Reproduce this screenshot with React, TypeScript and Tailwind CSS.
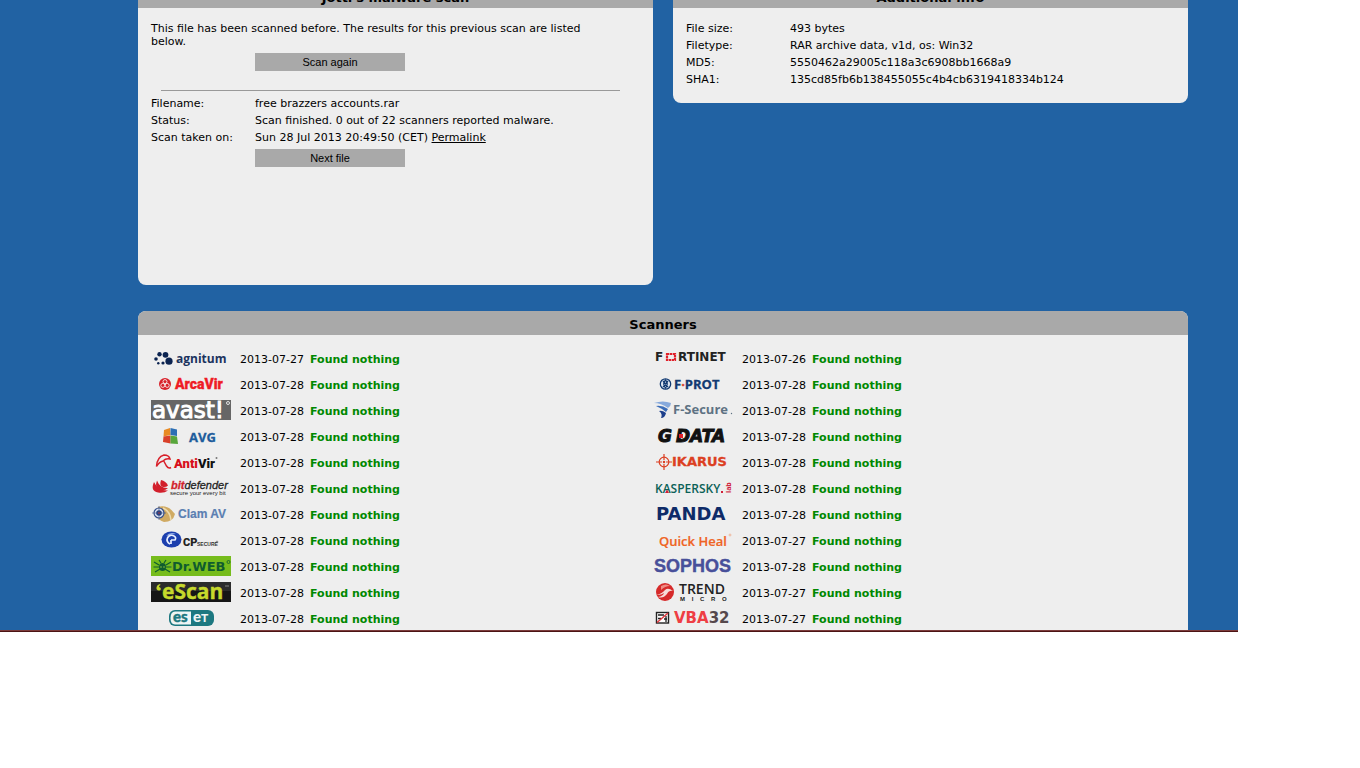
import React from "react";

type Scanner = { name: string; date: string; logo: React.ReactNode };

const leftScanners: Scanner[] = [
  {
    name: "agnitum",
    date: "2013-07-27",
    logo: (
      <>
        <g fill="#0b2350">
          <circle cx="5" cy="11" r="1.8" />
          <circle cx="8.5" cy="6.3" r="2.2" />
          <circle cx="14.5" cy="6.8" r="2.9" />
          <circle cx="18" cy="13.2" r="3.6" />
          <circle cx="12" cy="15" r="1.6" />
          <circle cx="7.3" cy="15.2" r="1.2" />
        </g>
        <text x="25" y="15" fontFamily="Open Sans" fontWeight="700" fontSize="12" fill="#1b335e">agnitum</text>
      </>
    ),
  },
  {
    name: "ArcaVir",
    date: "2013-07-28",
    logo: (
      <>
        <circle cx="14" cy="10" r="6" fill="#d8202a" />
        <g fill="none" stroke="#f6dcdc" strokeWidth="1">
          <circle cx="14" cy="7.6" r="2" />
          <circle cx="11.8" cy="11.4" r="2" />
          <circle cx="16.2" cy="11.4" r="2" />
        </g>
        <text x="24" y="15" fontFamily="Roboto" fontWeight="900" fontSize="14" fill="#ee1c25" stroke="#ee1c25" strokeWidth="0.3">ArcaVir</text>
      </>
    ),
  },
  {
    name: "avast!",
    date: "2013-07-28",
    logo: (
      <>
        <rect width="80" height="20" fill="#666" />
        <text x="1" y="18" fontFamily="DejaVu Sans" fontSize="23" fill="#fff" stroke="#fff" strokeWidth="1">avast!</text>
        <circle cx="77" cy="3" r="1.5" fill="none" stroke="#fff" strokeWidth="0.8" />
      </>
    ),
  },
  {
    name: "AVG",
    date: "2013-07-28",
    logo: (
      <>
        <path d="M13 4 L19 2 L19.500 9 L12.500 10.500z" fill="#e88a22" />
        <path d="M19.500 2 L26 3.500 L26 10 L19.500 9z" fill="#2c6fb4" />
        <path d="M12.500 10.500 L19.500 9.500 L19.500 17.500 L12 16z" fill="#d8402a" />
        <path d="M19.500 9.500 L26 10.500 L27 18 L19.500 17.500z" fill="#58a63c" />
        <text x="38" y="16" fontFamily="Open Sans" fontWeight="700" fontSize="13" fill="#1d5c9c" stroke="#1d5c9c" strokeWidth="0.3">AVG</text>
      </>
    ),
  },
  {
    name: "AntiVir",
    date: "2013-07-28",
    logo: (
      <>
        <path d="M5.500 14.500 Q6 5 13 3 Q18 3 19 7 Q15 6 12 9 Q8 10 5.500 14.500z M12.500 8.500 L15.500 14 Q17.500 17 20 15.500" fill="none" stroke="#d8202a" strokeWidth="1.500" />
        <text x="23" y="16" fontFamily="Roboto" fontWeight="900" fontSize="13" fill="#d8101a">
          Anti<tspan fill="#111">Vir</tspan>
        </text>
        <circle cx="65.500" cy="6" r="1" fill="#777" />
      </>
    ),
  },
  {
    name: "bitdefender",
    date: "2013-07-28",
    logo: (
      <>
        <path d="M3 4 Q-1 13 7 14.500 Q13 15.500 17 12.500 Q7 13 3 4z" fill="#d21f2b" />
        <path d="M6 2.500 Q3 10 9 12 Q14 13 17 10 Q9 10.500 6 2.500z" fill="#d21f2b" />
        <path d="M10 2 Q8 8 12 9 Q15 9.500 17 7.500 Q15 3 10 2z" fill="#d21f2b" />
        <text x="20" y="11" fontFamily="Liberation Sans" fontWeight="700" fontStyle="italic" fontSize="11" fill="#d21f2b" stroke="#d21f2b" strokeWidth="0.3">
          bit<tspan fill="#222" stroke="#222" fontWeight="400">defender</tspan>
        </text>
        <text x="19" y="17" fontFamily="Liberation Sans" fontWeight="400" fontSize="6" fill="#222">secure your every bit</text>
      </>
    ),
  },
  {
    name: "ClamAV",
    date: "2013-07-28",
    logo: (
      <>
        <path d="M7 3 Q17 0 24 10 Q22 18 13 18 Q4 16 7 3z" fill="#d0aa62" />
        <path d="M12 4 Q19 7 20 16" fill="none" stroke="#eedbae" strokeWidth="1.5" />
        <circle cx="8" cy="9" r="5" fill="#dce4f4" stroke="#36508c" strokeWidth="1.2" />
        <circle cx="8" cy="9" r="2.8" fill="#27407e" />
        <circle cx="8" cy="9" r="1" fill="#c22" />
        <path d="M8 2 V16 M1 9 H15" stroke="#36508c" strokeWidth="0.6" />
        <text x="27" y="14" fontFamily="Liberation Sans" fontWeight="700" fontSize="12" fill="#5b7fb2" stroke="#5b7fb2" strokeWidth="0.2">Clam AV</text>
      </>
    ),
  },
  {
    name: "CP Secure",
    date: "2013-07-28",
    logo: (
      <>
        <ellipse cx="20.500" cy="9.500" rx="10" ry="8" fill="#1c3fae" />
        <path d="M15 6 Q19 1.500 25 4 Q20 4 15 6z" fill="#8eabec" />
        <path d="M23 6 A4.500 4.500 0 1 0 19 14 M20 10 H24 A2.500 2.500 0 0 0 23 6 M20 10 V14" fill="none" stroke="#e8efff" strokeWidth="1.700" />
        <text x="32" y="16" fontFamily="Roboto" fontWeight="900" fontSize="11" fill="#222">CP</text>
        <text x="46" y="16" fontFamily="Liberation Sans" fontWeight="700" fontSize="5" fill="#333">SECURE</text>
        <circle cx="66" cy="12" r="0.9" fill="none" stroke="#444" strokeWidth="0.6" />
      </>
    ),
  },
  {
    name: "Dr.WEB",
    date: "2013-07-28",
    logo: (
      <>
        <rect width="80" height="20" fill="#76bc1c" />
        <ellipse cx="11.5" cy="11" rx="3.5" ry="4" fill="#0f5c2e" />
        <path d="M3 6 L8 9 M2.500 11 H8 M4 16 L9 13 M20 6 L15 9 M20.500 11 H15 M19 16 L14 13 M8 4 L10 7 M15 4 L13 7" stroke="#0f5c2e" strokeWidth="1.2" fill="none" />
        <path d="M10 10 V12 M13 10 V12" stroke="#9ad040" strokeWidth="0.8" />
        <text x="21" y="15" fontFamily="DejaVu Sans" fontWeight="700" fontSize="13" fill="#0f5c2e">Dr.WEB</text>
        <circle cx="77.500" cy="6" r="1.500" fill="none" stroke="#0f5c2e" strokeWidth="0.8" />
      </>
    ),
  },
  {
    name: "eScan",
    date: "2013-07-28",
    logo: (
      <>
        <rect width="80" height="20" fill="#161616" />
        <rect width="80" height="9" fill="#2c2c2c" />
        <path d="M9 2 Q5 3 5.500 7 Q7 9.500 9.500 8 Q10.500 5.500 8 5 Q8 3.500 9.500 3z" fill="#c6d92c" />
        <text x="11" y="17" fontFamily="Open Sans" fontWeight="700" fontSize="21" fill="#c6d92c" stroke="#c6d92c" strokeWidth="0.4">eScan</text>
        <path d="M74 4 H78" stroke="#999" strokeWidth="0.8" />
      </>
    ),
  },
  {
    name: "ESET",
    date: "2013-07-28",
    logo: (
      <>
        <rect x="18" y="2" width="45" height="16" rx="6" fill="#1d7880" />
        <path d="M24 3.500 H40 V16.500 H24 Q19.500 16.500 19.500 10 Q19.500 3.500 24 3.500z" fill="#eef4f4" />
        <text x="22" y="14" fontFamily="Lato" fontWeight="900" fontSize="15" fill="#1d7880" stroke="#1d7880" strokeWidth="0.4">es</text>
        <text x="42" y="14" fontFamily="Lato" fontWeight="900" fontSize="15" fill="#eef4f4">
          e<tspan fontSize="12">T</tspan>
        </text>
      </>
    ),
  },
];

const rightScanners: Scanner[] = [
  {
    name: "Fortinet",
    date: "2013-07-26",
    logo: (
      <>
        <text x="2" y="13" fontFamily="DejaVu Sans" fontWeight="700" fontSize="12" fill="#222">F</text>
        <rect x="14" y="6" width="8" height="6" fill="none" stroke="#e0202a" strokeWidth="2.2" strokeDasharray="2.4 0.6" />
        <text x="25" y="13" fontFamily="DejaVu Sans" fontWeight="700" fontSize="12" fill="#222">RTINET</text>
      </>
    ),
  },
  {
    name: "F-PROT",
    date: "2013-07-28",
    logo: (
      <>
        <circle cx="12.5" cy="10" r="5.2" fill="#dfe7f2" stroke="#123a72" strokeWidth="1.3" />
        <path d="M10 7 L15 13 M15 7 L10 13 M12.500 6 Q16 10 12.500 14 Q9 10 12.500 6z" fill="none" stroke="#123a72" strokeWidth="1.2" />
        <text x="21" y="15" fontFamily="Open Sans" fontWeight="700" fontSize="13" fill="#123a72" stroke="#123a72" strokeWidth="0.3">
          F<tspan fill="#d8402a" stroke="#d8402a">·</tspan>PROT
        </text>
      </>
    ),
  },
  {
    name: "F-Secure",
    date: "2013-07-28",
    logo: (
      <>
        <path d="M1 3 Q10 0 18 3 Q18 6 15 8 Q8 3 1 3z" fill="#86a9dc" />
        <path d="M3 6 Q9 5 15 9 L13 12 Q8 8 3 6z" fill="#3a6cb8" />
        <path d="M6 11 Q9 10 13 13 Q12 18 8 18 Q10 14 6 11z" fill="#1d3f8c" />
        <text x="20" y="14" fontFamily="Open Sans" fontWeight="700" fontSize="13" fill="#5e7283">F-Secure</text>
        <circle cx="78.5" cy="13.5" r="0.7" fill="#5e7283" />
      </>
    ),
  },
  {
    name: "G DATA",
    date: "2013-07-28",
    logo: (
      <>
        <text x="5" y="16" fontFamily="DejaVu Sans" fontWeight="700" fontStyle="italic" fontSize="17" fill="#111" stroke="#111" strokeWidth="1">G</text>
        <text x="23" y="16" fontFamily="DejaVu Sans" fontWeight="700" fontStyle="italic" fontSize="17" fill="#111" stroke="#111" strokeWidth="1">DATA</text>
        <rect x="26" y="8" width="4" height="4" fill="#e0202a" />
      </>
    ),
  },
  {
    name: "IKARUS",
    date: "2013-07-28",
    logo: (
      <>
        <circle cx="11" cy="10" r="4.8" fill="none" stroke="#dc3f22" strokeWidth="1.2" />
        <path d="M11 2 V8 M11 12 V18 M3 10 H9 M13 10 H19" stroke="#dc3f22" strokeWidth="1.2" />
        <circle cx="11" cy="10" r="1.2" fill="#dc3f22" />
        <text x="19" y="14" fontFamily="DejaVu Sans" fontWeight="700" fontSize="13" fill="#dc3f22" stroke="#dc3f22" strokeWidth="0.3">IKARUS</text>
      </>
    ),
  },
  {
    name: "Kaspersky lab",
    date: "2013-07-28",
    logo: (
      <>
        <text x="2" y="15" fontFamily="Open Sans" fontWeight="600" fontSize="12" fill="#0b6157">KASPERSKY</text>
        <path d="M12 15 L14 11.500 L16 15z M68 13 h2 v2 h-2z" fill="#d0213a" />
        <text x="-15" y="78" transform="rotate(-90)" fontFamily="Open Sans" fontWeight="700" fontSize="7" fill="#d0213a">lab</text>
      </>
    ),
  },
  {
    name: "PANDA",
    date: "2013-07-28",
    logo: <text x="3" y="16" fontFamily="DejaVu Sans" fontWeight="700" fontSize="18" fill="#0e2b68">PANDA</text>,
  },
  {
    name: "Quick Heal",
    date: "2013-07-27",
    logo: (
      <>
        <text x="6" y="16" fontFamily="Open Sans" fontWeight="600" fontSize="13" fill="#ee6424" stroke="#ee6424" strokeWidth="0.2">Quick Heal</text>
        <circle cx="77" cy="5" r="1" fill="none" stroke="#ee9a70" strokeWidth="0.6" />
      </>
    ),
  },
  {
    name: "SOPHOS",
    date: "2013-07-28",
    logo: <text x="1" y="16" fontFamily="Liberation Sans" fontWeight="700" fontSize="18" fill="#48509a" stroke="#48509a" strokeWidth="0.4">SOPHOS</text>,
  },
  {
    name: "Trend Micro",
    date: "2013-07-27",
    logo: (
      <>
        <circle cx="12" cy="10" r="9" fill="#d62a2a" />
        <path d="M8 4 Q13 1 17 4 Q12 4 8 8z" fill="#ee8c84" />
        <path d="M3 12 Q8 13 12 8 Q15 5 20 9 Q16 8 14 12 Q10 17 5 15 Q10 14 11 11 Q7 14 3 12z" fill="#f6dcd8" />
        <text x="26" y="12" fontFamily="Open Sans" fontWeight="600" fontSize="14" fill="#222">TREND</text>
        <text x="27" y="19" fontFamily="Liberation Sans" fontWeight="700" fontSize="6" fill="#222">
          {"M\u00a0\u00a0\u00a0\u00a0I\u00a0\u00a0\u00a0\u00a0C\u00a0\u00a0\u00a0\u00a0R\u00a0\u00a0\u00a0\u00a0O"}
        </text>
      </>
    ),
  },
  {
    name: "VBA32",
    date: "2013-07-27",
    logo: (
      <>
        <rect x="3.500" y="4.500" width="12" height="10.500" fill="#fff" stroke="#222" strokeWidth="1.400" />
        <path d="M5 7 H11 M5 10.500 H8 M11 11 H14 M13 8 V14" stroke="#222" strokeWidth="1.300" />
        <path d="M4 14.500 L15 5" stroke="#e03a40" strokeWidth="1.600" />
        <text x="21" y="15" fontFamily="DejaVu Sans" fontWeight="700" fontSize="15" fill="#ee3e44">
          VBA<tspan fill="#55484c">32</tspan>
        </text>
      </>
    ),
  },
];

const PanelTitle = ({ children }: { children: React.ReactNode }) => (
  <h2 className="flex h-6 items-center justify-center bg-[#a9a9a9] pt-1 text-[13px] leading-4 font-bold">
    {children}
  </h2>
);

const GrayButton = ({ children }: { children: React.ReactNode }) => (
  <button
    type="button"
    className="block h-[18px] w-[150px] bg-[#a9a9a9] font-['Liberation_Sans',sans-serif] text-[11px] leading-[18px]"
  >
    {children}
  </button>
);

const InfoTable = ({ rows }: { rows: [string, React.ReactNode][] }) => (
  <table className="w-full">
    <tbody>
      {rows.map(([label, value]) => (
        <tr key={label} className="h-[17px]">
          <th scope="row" className="w-[104px] text-left font-normal">{label}</th>
          <td>{value}</td>
        </tr>
      ))}
    </tbody>
  </table>
);

const ScannerTable = ({ scanners }: { scanners: Scanner[] }) => (
  <table className="w-full">
    <tbody>
      {scanners.map((s) => (
        <tr key={s.name} className="h-[26px]">
          <td className="w-[89px] pb-[2px]">
            <svg width="80" height="20" viewBox="0 0 80 20" className="block overflow-visible" role="img" aria-label={s.name}>
              {s.logo}
            </svg>
          </td>
          <td className="w-[70px]">{s.date}</td>
          <td className="font-bold text-[#008800]">Found nothing</td>
        </tr>
      ))}
    </tbody>
  </table>
);

const App = () => {
  return (
    <div className="min-h-screen bg-white font-['DejaVu_Sans',sans-serif] text-[11px] leading-[13px] text-black">
      <main className="mr-[122px] h-[630px] overflow-hidden bg-[#2162a3] pr-[50px] pl-[138px]">
        {/* The page is scrolled, so the first titles are cut by the top edge */}
        <div className="-mt-4 flex items-start gap-5">
          <section className="min-h-[301px] flex-1 overflow-hidden rounded-lg bg-[#eee]">
            <PanelTitle>Jotti's malware scan</PanelTitle>
            <div className="px-[13px] pt-[14px]">
              <p className="pr-8">
                This file has been scanned before. The results for this previous scan are listed below.
              </p>
              <div className="mt-[5px] ml-[104px]">
                <GrayButton>Scan again</GrayButton>
              </div>
              <hr className="mt-[19px] mr-5 mb-1 ml-[10px] border-[#999]" />
              <InfoTable
                rows={[
                  ["Filename:", "free brazzers accounts.rar"],
                  ["Status:", "Scan finished. 0 out of 22 scanners reported malware."],
                  [
                    "Scan taken on:",
                    <>
                      Sun 28 Jul 2013 20:49:50 (CET) <a href="#" className="underline">Permalink</a>
                    </>,
                  ],
                ]}
              />
              <div className="mt-[3px] ml-[104px]">
                <GrayButton>Next file</GrayButton>
              </div>
            </div>
          </section>

          <section className="flex-1 overflow-hidden rounded-lg bg-[#eee]">
            <PanelTitle>Additional info</PanelTitle>
            <div className="px-[13px] pt-3 pb-[15px]">
              <InfoTable
                rows={[
                  ["File size:", "493 bytes"],
                  ["Filetype:", "RAR archive data, v1d, os: Win32"],
                  ["MD5:", "5550462a29005c118a3c6908bb1668a9"],
                  ["SHA1:", "135cd85fb6b138455055c4b4cb6319418334b124"],
                ]}
              />
            </div>
          </section>
        </div>

        <section className="mt-[26px] overflow-hidden rounded-lg bg-[#eee]">
          <PanelTitle>Scanners</PanelTitle>
          <div className="grid grid-cols-2 pt-[11px] pr-[33px] pb-4 pl-[13px]">
            <ScannerTable scanners={leftScanners} />
            <ScannerTable scanners={rightScanners} />
          </div>
        </section>
      </main>
      <div className="mr-[122px] h-[2px] border-t border-[#7c3c3c] bg-[#4c1414]" />
    </div>
  );
};

export default App;
